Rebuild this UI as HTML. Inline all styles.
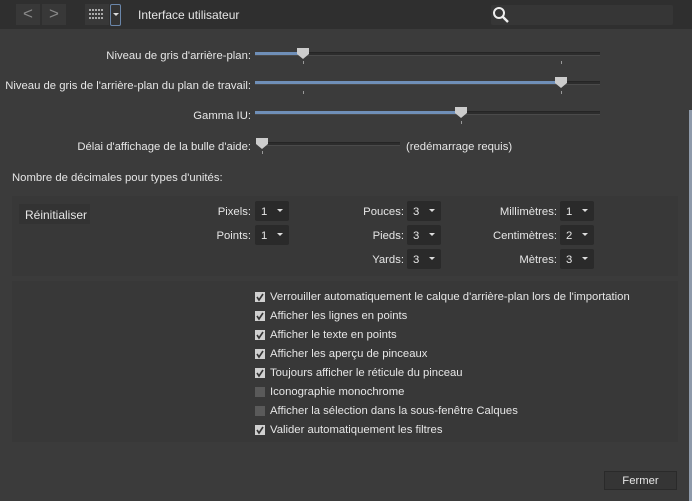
<!DOCTYPE html><html><head><meta charset="utf-8"><style>
*{box-sizing:border-box;margin:0;padding:0}
body{width:692px;height:501px;background:#3b3b3b;font-family:"Liberation Sans",sans-serif;font-size:11.3px;color:#e6e6e6;position:relative;overflow:hidden}
.a{position:absolute}
.top{left:0;top:0;width:692px;height:29px;background:#2f2f2f}
.lbl{position:absolute;text-align:right;white-space:nowrap}
.track{position:absolute;height:4px;border-top:1px solid #252525;border-bottom:1px solid #4a4a4a;background:#2c2c2c}
.fill{position:absolute;height:3px;background:#6f8fb8}
.thumb{position:absolute;width:12px;height:11px}
.tick{position:absolute;width:1px;height:3px;background:#999}
.dd{position:absolute;width:34px;height:20px;background:#2a2a2a;border-radius:2px;padding:5px 0 0 6px;color:#e8e8e8}
.dd:after{content:"";position:absolute;right:6px;top:8px;border:3px solid transparent;border-top:3px solid #ddd}
.cb{position:absolute;left:255px;width:10px;height:10px;background:#5a5a5a}
.cb.on{background:#d0d0d0}
.cbt{position:absolute;left:270px;white-space:nowrap}
.ck{position:absolute;left:0;top:0}
</style></head><body>
<div class="a top"></div>
<div class="a" style="left:16px;top:4px;width:24px;height:21px;background:#383838;color:#888;font-size:17px;text-align:center;line-height:19px">&lt;</div>
<div class="a" style="left:42px;top:4px;width:24px;height:21px;background:#383838;color:#888;font-size:17px;text-align:center;line-height:19px">&gt;</div>
<div class="a" style="left:85px;top:4px;width:24px;height:21px;background:#383838"></div>
<svg class="a" style="left:89px;top:9px" width="16" height="12"><g fill="#aaa"><rect x="0" y="0" width="2" height="2"/><rect x="3" y="0" width="2" height="2"/><rect x="6" y="0" width="2" height="2"/><rect x="9" y="0" width="2" height="2"/><rect x="12" y="0" width="2" height="2"/><rect x="0" y="4" width="2" height="2"/><rect x="3" y="4" width="2" height="2"/><rect x="6" y="4" width="2" height="2"/><rect x="9" y="4" width="2" height="2"/><rect x="12" y="4" width="2" height="2"/><rect x="0" y="8" width="2" height="2"/><rect x="3" y="8" width="2" height="2"/><rect x="6" y="8" width="2" height="2"/><rect x="9" y="8" width="2" height="2"/><rect x="12" y="8" width="2" height="2"/></g></svg>
<div class="a" style="left:110px;top:4px;width:11px;height:22px;border:1px solid #6a86aa;border-radius:2px;background:#333"></div>
<div class="a" style="left:113px;top:13px;border:3px solid transparent;border-top:3px solid #ddd"></div>
<div class="a" style="left:138px;top:8px;font-size:12px">Interface utilisateur</div>
<div class="a" style="left:491px;top:5px;width:182px;height:20px;background:#363636;border-radius:2px"></div>
<svg class="a" style="left:492px;top:6px" width="18" height="18"><circle cx="7" cy="7" r="5" stroke="#eee" stroke-width="2" fill="none"/><line x1="11" y1="11" x2="16" y2="16" stroke="#eee" stroke-width="2.4"/></svg>
<div class="a" style="left:689px;top:110px;width:3px;height:391px;background:#8e9aaa"></div>

<div class="lbl" style="right:441px;top:50px">Niveau de gris d'arrière-plan:</div>
<div class="track" style="left:255px;top:52px;width:345px"></div><div class="fill" style="left:255px;top:52px;width:48px"></div>
<svg class="thumb" style="left:297px;top:48px"><path d="M0 0H12V6L6 11L0 6Z" fill="#ccc"/></svg><div class="tick" style="left:303px;top:61px"></div><div class="tick" style="left:561px;top:61px"></div>

<div class="lbl" style="right:441px;top:80px">Niveau de gris de l'arrière-plan du plan de travail:</div>
<div class="track" style="left:255px;top:81px;width:345px"></div><div class="fill" style="left:255px;top:81px;width:306px"></div>
<svg class="thumb" style="left:555px;top:77px"><path d="M0 0H12V6L6 11L0 6Z" fill="#ccc"/></svg><div class="tick" style="left:561px;top:91px"></div><div class="tick" style="left:303px;top:91px"></div>

<div class="lbl" style="right:441px;top:110px">Gamma IU:</div>
<div class="track" style="left:255px;top:111px;width:345px"></div><div class="fill" style="left:255px;top:111px;width:206px"></div>
<svg class="thumb" style="left:455px;top:107px"><path d="M0 0H12V6L6 11L0 6Z" fill="#ccc"/></svg><div class="tick" style="left:461px;top:121px"></div>

<div class="lbl" style="right:441px;top:141px">Délai d'affichage de la bulle d'aide:</div>
<div class="track" style="left:258px;top:142px;width:142px"></div>
<svg class="thumb" style="left:256px;top:138px"><path d="M0 0H12V6L6 11L0 6Z" fill="#ccc"/></svg><div class="tick" style="left:262px;top:151px"></div>
<div class="a" style="left:406px;top:141px">(redémarrage requis)</div>

<div class="a" style="left:12px;top:172px">Nombre de décimales pour types d'unités:</div>
<div class="a" style="left:12px;top:196px;width:666px;height:80px;background:#383838"></div>
<div class="a" style="left:19px;top:204px;width:71px;height:20px;background:#333;padding:4px 0 0 6px;font-size:12px">Réinitialiser</div>
<div class="lbl" style="right:441px;top:206px">Pixels:</div><div class="dd" style="left:255px;top:201px">1</div>
<div class="lbl" style="right:441px;top:230px">Points:</div><div class="dd" style="left:255px;top:225px">1</div>
<div class="lbl" style="right:288px;top:206px">Pouces:</div><div class="dd" style="left:407px;top:201px">3</div>
<div class="lbl" style="right:288px;top:230px">Pieds:</div><div class="dd" style="left:407px;top:225px">3</div>
<div class="lbl" style="right:288px;top:254px">Yards:</div><div class="dd" style="left:407px;top:249px">3</div>
<div class="lbl" style="right:135px;top:206px">Millimètres:</div><div class="dd" style="left:560px;top:201px">1</div>
<div class="lbl" style="right:135px;top:230px">Centimètres:</div><div class="dd" style="left:560px;top:225px">2</div>
<div class="lbl" style="right:135px;top:254px">Mètres:</div><div class="dd" style="left:560px;top:249px">3</div>

<div class="a" style="left:12px;top:281px;width:666px;height:161px;background:#383838"></div>
<div class="cb on" style="top:292px"><svg class="ck" width="10" height="10"><path d="M2 5L4 8L8 2" stroke="#333" stroke-width="1.6" fill="none"/></svg></div><div class="cbt" style="top:291px">Verrouiller automatiquement le calque d'arrière-plan lors de l'importation</div>
<div class="cb on" style="top:311px"><svg class="ck" width="10" height="10"><path d="M2 5L4 8L8 2" stroke="#333" stroke-width="1.6" fill="none"/></svg></div><div class="cbt" style="top:310px">Afficher les lignes en points</div>
<div class="cb on" style="top:330px"><svg class="ck" width="10" height="10"><path d="M2 5L4 8L8 2" stroke="#333" stroke-width="1.6" fill="none"/></svg></div><div class="cbt" style="top:329px">Afficher le texte en points</div>
<div class="cb on" style="top:349px"><svg class="ck" width="10" height="10"><path d="M2 5L4 8L8 2" stroke="#333" stroke-width="1.6" fill="none"/></svg></div><div class="cbt" style="top:348px">Afficher les aperçu de pinceaux</div>
<div class="cb on" style="top:368px"><svg class="ck" width="10" height="10"><path d="M2 5L4 8L8 2" stroke="#333" stroke-width="1.6" fill="none"/></svg></div><div class="cbt" style="top:367px">Toujours afficher le réticule du pinceau</div>
<div class="cb" style="top:387px"></div><div class="cbt" style="top:386px">Iconographie monochrome</div>
<div class="cb" style="top:406px"></div><div class="cbt" style="top:405px">Afficher la sélection dans la sous-fenêtre Calques</div>
<div class="cb on" style="top:425px"><svg class="ck" width="10" height="10"><path d="M2 5L4 8L8 2" stroke="#333" stroke-width="1.6" fill="none"/></svg></div><div class="cbt" style="top:424px">Valider automatiquement les filtres</div>

<div class="a" style="left:604px;top:471px;width:73px;height:19px;background:#353535;border:1px solid #2a2a2a;text-align:center;padding-top:3px">Fermer</div>
</body></html>
